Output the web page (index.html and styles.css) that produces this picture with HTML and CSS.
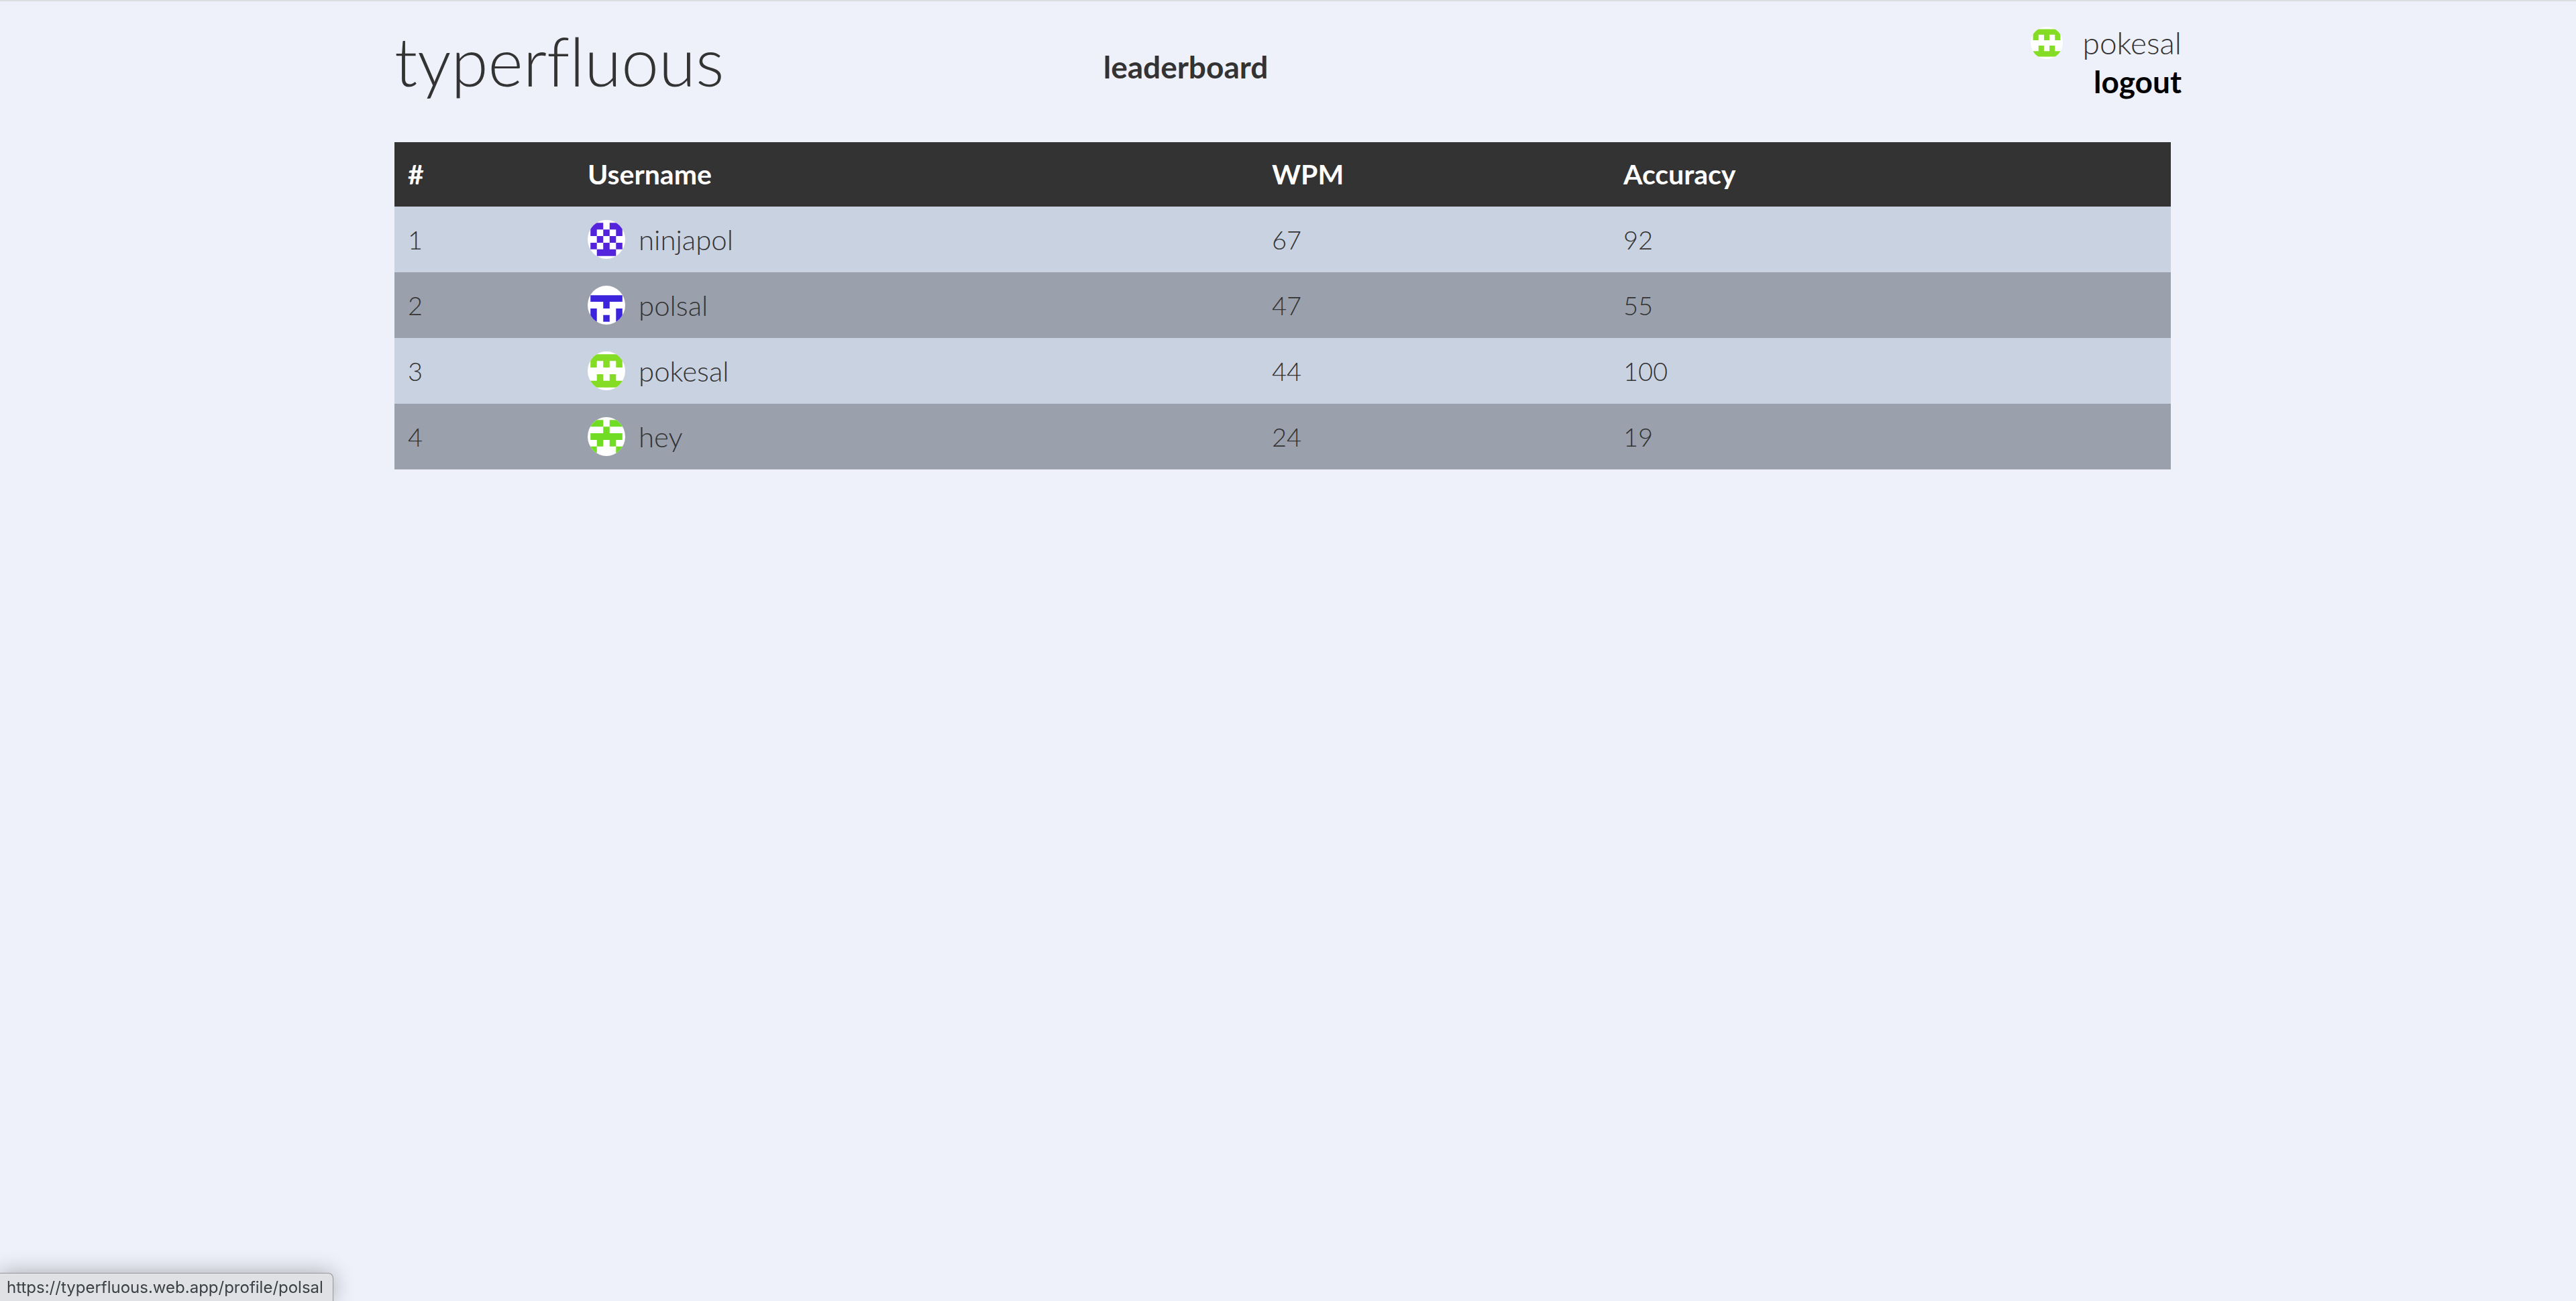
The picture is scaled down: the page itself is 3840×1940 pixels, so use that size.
FILE: index.html
```html
<!DOCTYPE html>
<html lang="en">
<head>
<meta charset="utf-8">
<meta name="viewport" content="width=device-width, initial-scale=1">
<title>typerfluous</title>
<link rel="stylesheet" href="styles.css">
</head>
<body>
<svg class="sprite" aria-hidden="true">
  <symbol id="av-ninjapol" viewBox="-15 -15 200 200" preserveAspectRatio="none">
    <path d="M0 0h34v34h-34zM34 0h34v34h-34zM102 0h34v34h-34zM136 0h34v34h-34zM0 34h34v34h-34zM68 34h34v34h-34zM136 34h34v34h-34zM34 68h34v34h-34zM102 68h34v34h-34zM0 102h34v34h-34zM68 102h34v34h-34zM136 102h34v34h-34zM34 136h34v34h-34zM68 136h34v34h-34zM102 136h34v34h-34z"/>
  </symbol>
  <symbol id="av-polsal" viewBox="-15 -15 200 200" preserveAspectRatio="none">
    <path d="M0 34h34v34h-34zM34 34h34v34h-34zM68 34h34v34h-34zM102 34h34v34h-34zM136 34h34v34h-34zM68 68h34v34h-34zM0 102h34v34h-34zM136 102h34v34h-34zM0 136h34v34h-34zM68 136h34v34h-34zM136 136h34v34h-34z"/>
  </symbol>
  <symbol id="av-pokesal" viewBox="-15 -15 200 200" preserveAspectRatio="none">
    <path d="M0 0h34v34h-34zM34 0h34v34h-34zM68 0h34v34h-34zM102 0h34v34h-34zM136 0h34v34h-34zM0 34h34v34h-34zM68 34h34v34h-34zM136 34h34v34h-34zM34 102h34v34h-34zM102 102h34v34h-34zM0 136h34v34h-34zM34 136h34v34h-34zM68 136h34v34h-34zM102 136h34v34h-34zM136 136h34v34h-34z"/>
  </symbol>
  <symbol id="av-hey" viewBox="-15 -15 200 200" preserveAspectRatio="none">
    <path d="M0 0h34v34h-34zM34 0h34v34h-34zM102 0h34v34h-34zM136 0h34v34h-34zM68 34h34v34h-34zM0 68h34v34h-34zM34 68h34v34h-34zM68 68h34v34h-34zM102 68h34v34h-34zM136 68h34v34h-34zM34 102h34v34h-34zM102 102h34v34h-34zM0 136h34v34h-34zM136 136h34v34h-34z"/>
  </symbol>
</svg>
<div class="page">
  <header class="header">
    <a class="logo" href="#">typerfluous</a>
    <nav class="nav"><a class="nav-link" href="#">leaderboard</a></nav>
    <div class="account">
      <a class="account-user" href="#">
        <svg class="avatar avatar-small lime" aria-hidden="true"><use href="#av-pokesal"/></svg>
        <span>pokesal</span>
      </a>
      <button class="logout" type="button">logout</button>
    </div>
  </header>
  <main class="content">
    <table class="board">
      <thead>
        <tr><th class="col-rank" scope="col">#</th><th class="col-user" scope="col">Username</th><th class="col-wpm" scope="col">WPM</th><th scope="col">Accuracy</th></tr>
      </thead>
      <tbody>
        <tr><td>1</td><td><a class="player" href="#"><svg class="avatar violet" aria-hidden="true"><use href="#av-ninjapol"/></svg><span>ninjapol</span></a></td><td>67</td><td>92</td></tr>
        <tr><td>2</td><td><a class="player" href="#"><svg class="avatar indigo" aria-hidden="true"><use href="#av-polsal"/></svg><span>polsal</span></a></td><td>47</td><td>55</td></tr>
        <tr><td>3</td><td><a class="player" href="#"><svg class="avatar lime" aria-hidden="true"><use href="#av-pokesal"/></svg><span>pokesal</span></a></td><td>44</td><td>100</td></tr>
        <tr><td>4</td><td><a class="player" href="#"><svg class="avatar green" aria-hidden="true"><use href="#av-hey"/></svg><span>hey</span></a></td><td>24</td><td>19</td></tr>
      </tbody>
    </table>
  </main>
</div>
<div class="status">https://typerfluous.web.app/profile/polsal</div>
</body>
</html>
```

FILE: styles.css
```css
* {
  box-sizing: border-box;
}

body {
  margin: 0;
  min-height: 100vh;
  border-top: 2px solid #dcdde0;
  background: #eef1fa;
  color: #333;
  font-family: Lato, "Liberation Sans", sans-serif;
  font-size: 38px;
  font-weight: 300;
  font-variant-ligatures: none;
}

a {
  color: inherit;
  text-decoration: none;
}

.sprite {
  display: none;
}

.page {
  max-width: 2664px;
  margin: 0 auto;
}

.header {
  display: grid;
  grid-template-columns: 13fr 17fr auto;
  align-items: center;
  padding: 34px 0 60px;
}

.logo {
  padding-bottom: 8px;
  font-size: 100px;
  line-height: 108px;
}

.nav {
  padding-top: 12px;
}

.nav-link {
  font-size: 46px;
  font-weight: 700;
  line-height: 56px;
}

.account {
  display: flex;
  flex-direction: column;
  align-items: flex-end;
}

.account-user {
  display: flex;
  align-items: center;
  gap: 30px;
  font-size: 46px;
  line-height: 56px;
}

.logout {
  padding: 0;
  border: 0;
  background: none;
  color: #000;
  font: inherit;
  font-size: 46px;
  font-weight: 700;
  line-height: 60px;
}

.content {
  padding-right: 16px;
}

.board {
  width: 100%;
  table-layout: fixed;
  border-collapse: collapse;
  text-align: left;
}

.board th {
  padding: 20px;
  background: #333;
  color: #fff;
  font-size: 41px;
  font-weight: 700;
  line-height: 56px;
}

.board td {
  padding: 20px;
  line-height: 58px;
}

.board tbody tr:nth-child(odd) {
  background: #c9d2e1;
}

.board tbody tr:nth-child(even) {
  background: #9aa1ad;
}

.col-rank {
  width: 10.12%;
}

.col-user {
  width: 38.52%;
}

.col-wpm {
  width: 19.79%;
}

.player {
  display: flex;
  align-items: center;
  gap: 20px;
  font-size: 42px;
}

.avatar {
  width: 56px;
  height: 58px;
  border-radius: 50%;
  background: #fff;
}

.avatar-small {
  width: 48px;
  height: 48px;
}

.violet {
  fill: #5324dc;
}

.indigo {
  fill: #3c24dc;
}

.lime {
  fill: #84dc24;
}

.green {
  fill: #70dc24;
}

.status {
  position: fixed;
  bottom: 0;
  left: 0;
  padding: 0 14px 0 10px;
  border: 1px solid #96979b;
  border-width: 1px 1px 0 0;
  border-radius: 0 8px 0 0;
  background: #dfe1e5;
  box-shadow: 0 0 32px rgba(0, 0, 0, 0.3);
  color: #3c4043;
  font-family: Inter, "Liberation Sans", sans-serif;
  font-size: 24px;
  font-weight: 400;
  line-height: 41px;
}
```
